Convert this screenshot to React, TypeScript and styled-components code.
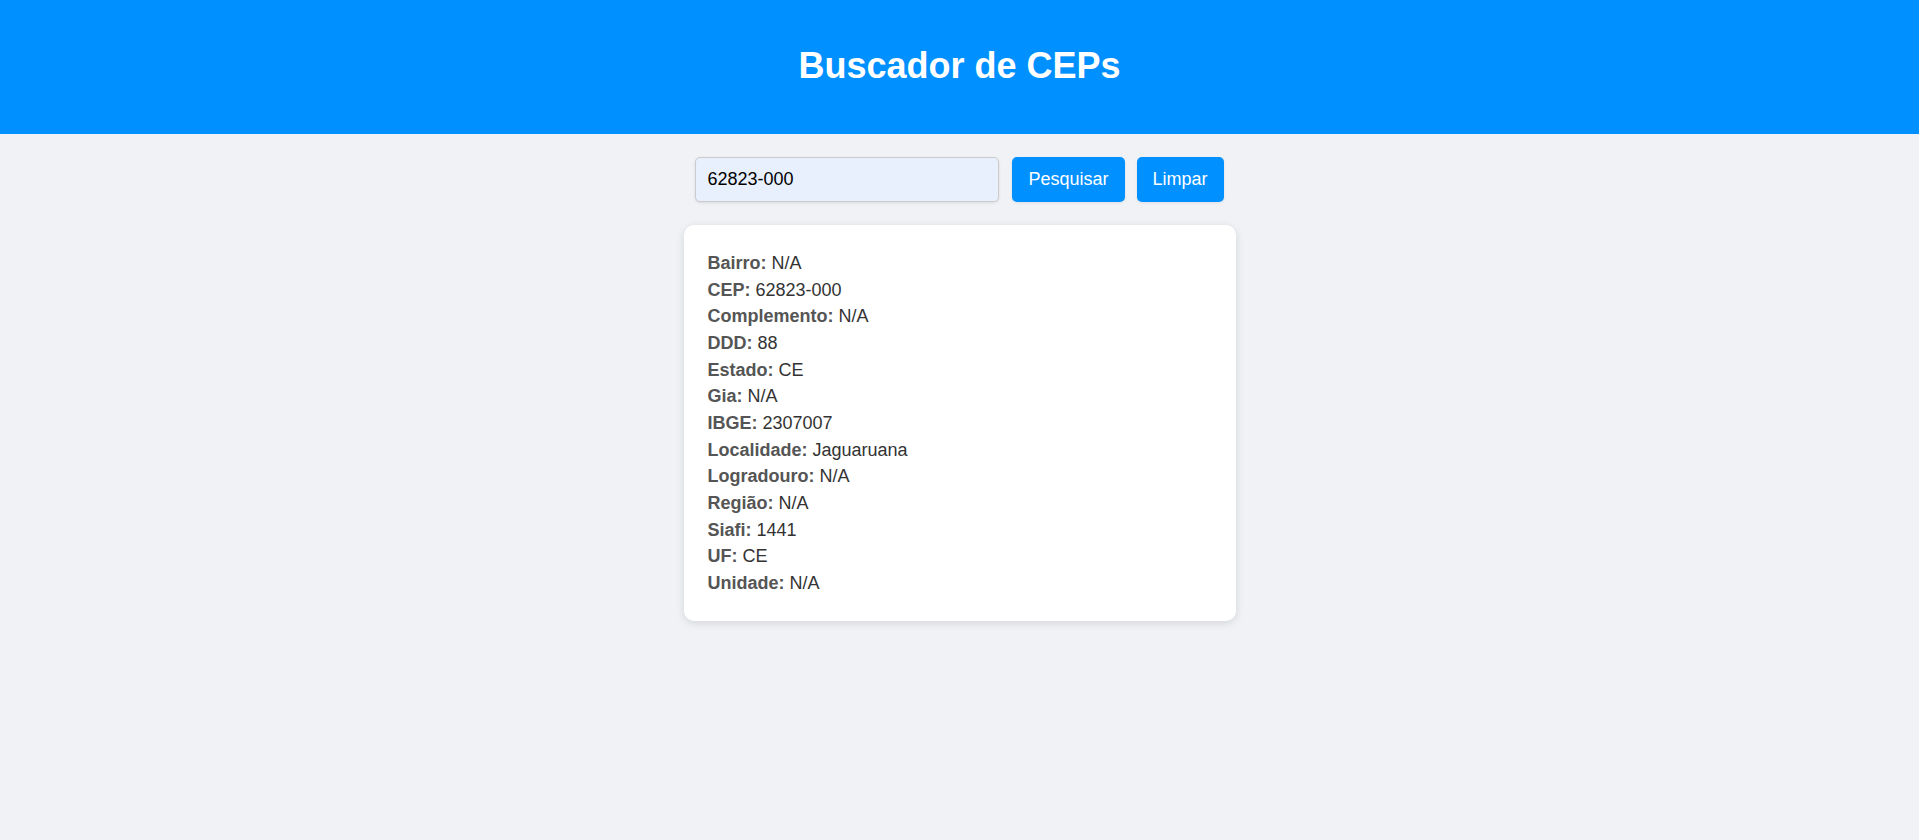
import React from "react";
import styled, { createGlobalStyle } from "styled-components";

const GlobalStyle = createGlobalStyle`
  html, body {
    margin: 0;
    padding: 0;
    background: #f0f2f5;
    font-family: "Liberation Sans", Arial, sans-serif;
  }
`;

const Page = styled.div`
  min-height: 840px;
  background: #f0f2f5;
`;

const Header = styled.header`
  height: 134px;
  box-sizing: border-box;
  background: #0090ff;
  display: flex;
  justify-content: center;
  padding-top: 45px;
`;

const Title = styled.h1`
  margin: 0;
  font-size: 36px;
  line-height: 41px;
  font-weight: 700;
  color: #ffffff;
`;

const Main = styled.main`
  display: flex;
  flex-direction: column;
  align-items: center;
  padding-top: 23px;
  gap: 23px;
`;

const SearchRow = styled.div`
  display: flex;
  gap: 12px;
  height: 45px;
`;

const Input = styled.input`
  width: 304px;
  height: 45px;
  margin-right: 1px;
  box-sizing: border-box;
  padding: 0 11px;
  border: 1px solid #cccccc;
  border-radius: 5px;
  background: #e8f0fe;
  font-family: "Liberation Sans", Arial, sans-serif;
  font-size: 18px;
  color: #000;
  box-shadow: 0 1px 3px rgba(0, 0, 0, 0.1);
  outline: none;
`;

const Button = styled.button`
  height: 45px;
  padding: 0 16px;
  border: none;
  border-radius: 5px;
  background: #0090ff;
  color: #ffffff;
  font-family: "Liberation Sans", Arial, sans-serif;
  font-size: 18px;
  cursor: pointer;
  box-shadow: 0 1px 3px rgba(0, 0, 0, 0.08);
`;

const Card = styled.section`
  width: 552px;
  box-sizing: border-box;
  padding: 25px 24px 24px;
  background: #ffffff;
  border-radius: 10px;
  box-shadow: 0 2px 8px rgba(0, 0, 0, 0.12);
`;

const Line = styled.p`
  margin: 0;
  font-size: 18px;
  line-height: 26.65px;
  color: #333333;
`;

const Label = styled.strong`
  color: #555555;
  font-weight: 700;
`;

const data: [string, string][] = [
  ["Bairro", "N/A"],
  ["CEP", "62823-000"],
  ["Complemento", "N/A"],
  ["DDD", "88"],
  ["Estado", "CE"],
  ["Gia", "N/A"],
  ["IBGE", "2307007"],
  ["Localidade", "Jaguaruana"],
  ["Logradouro", "N/A"],
  ["Região", "N/A"],
  ["Siafi", "1441"],
  ["UF", "CE"],
  ["Unidade", "N/A"],
];

export default function App() {
  return (
    <Page>
      <GlobalStyle />
      <Header>
        <Title>Buscador de CEPs</Title>
      </Header>
      <Main>
        <SearchRow>
          <Input defaultValue="62823-000" />
          <Button>Pesquisar</Button>
          <Button>Limpar</Button>
        </SearchRow>
        <Card>
          {data.map(([k, v]) => (
            <Line key={k}>
              <Label>{k}:</Label> {v}
            </Line>
          ))}
        </Card>
      </Main>
    </Page>
  );
}
